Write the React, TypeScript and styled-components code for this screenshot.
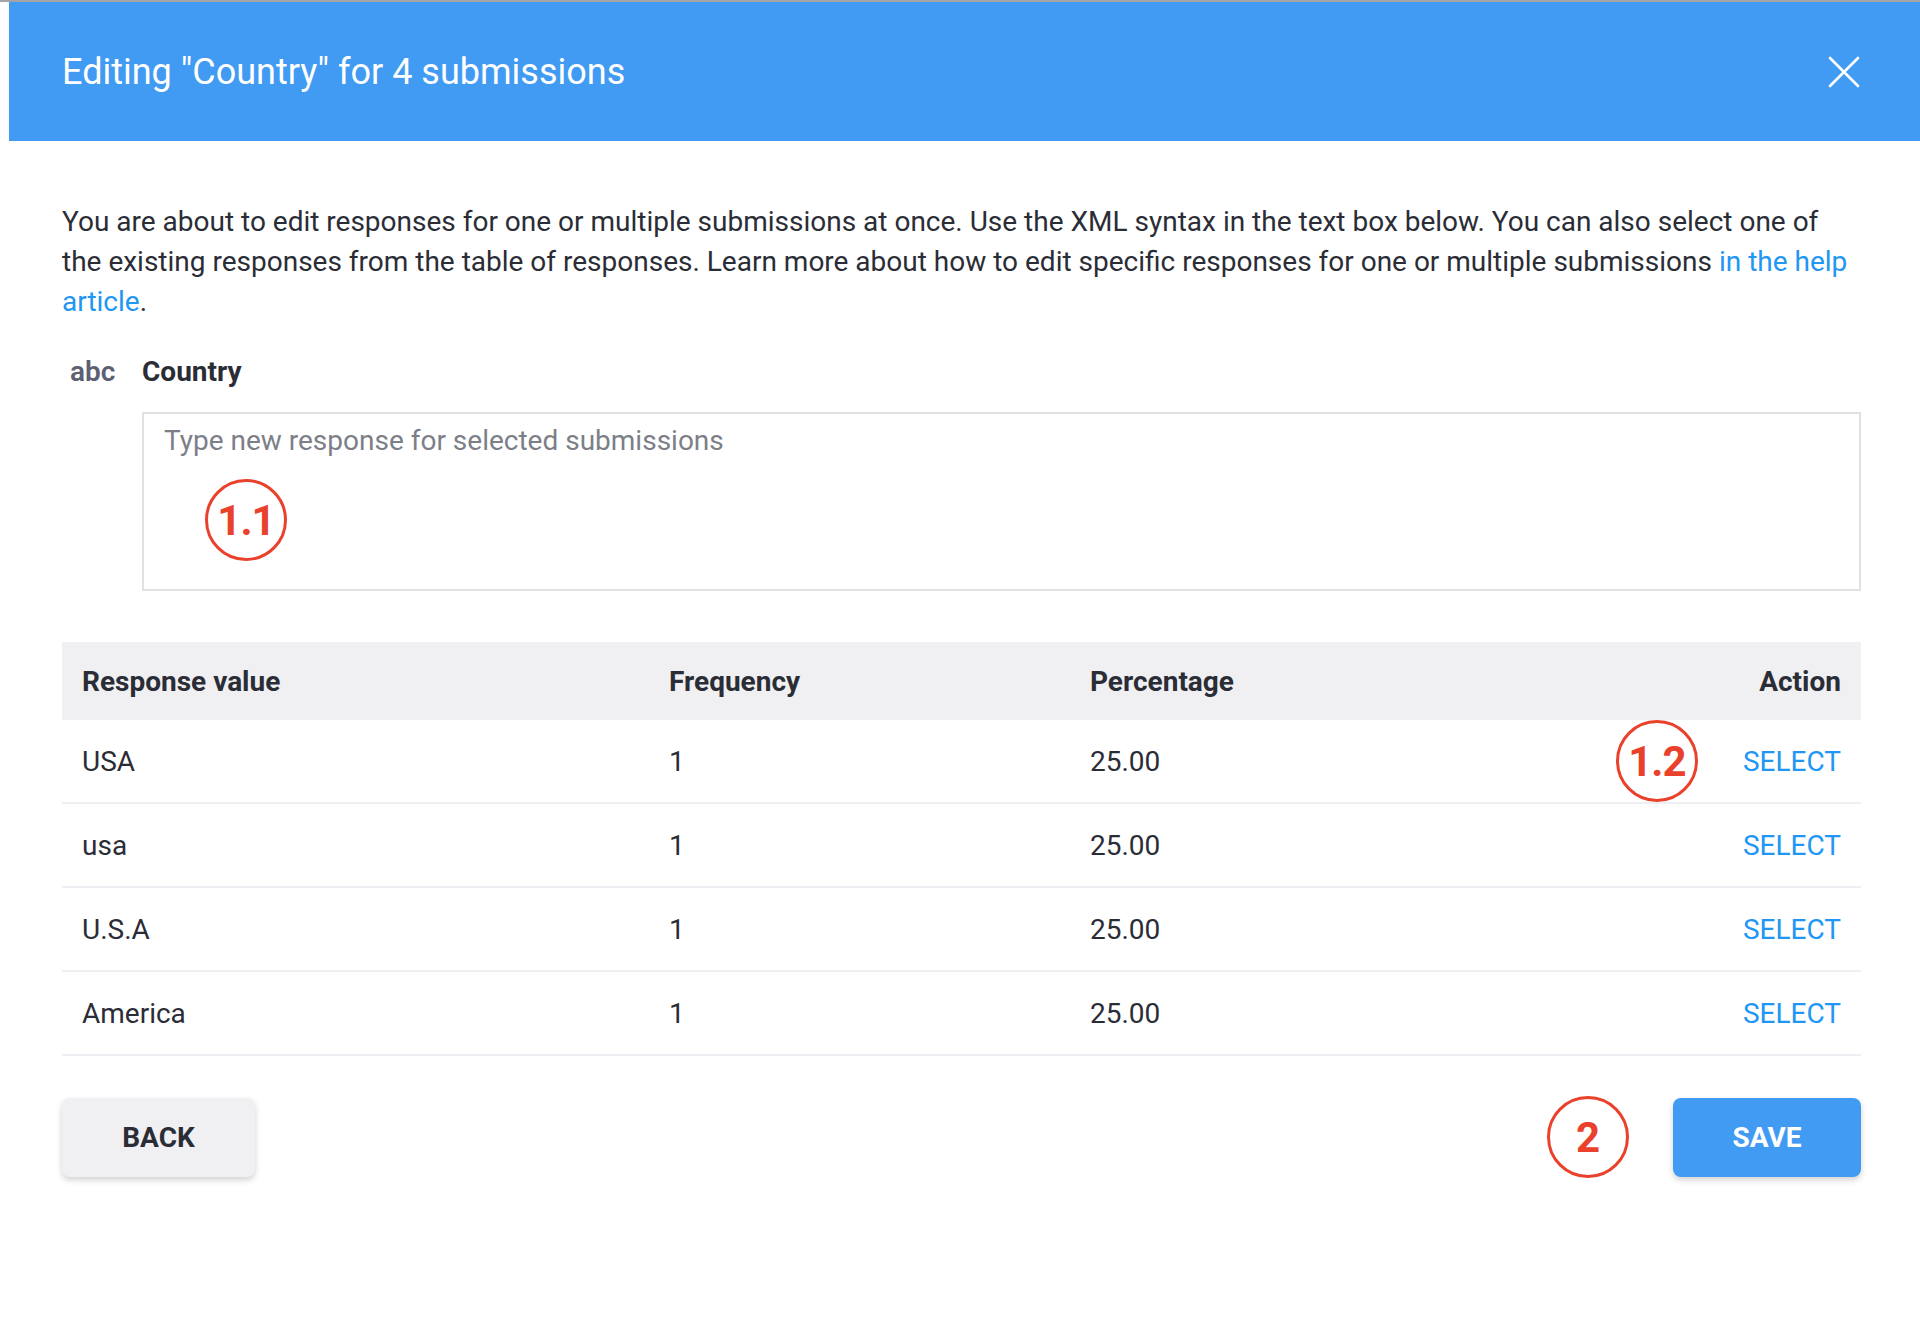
import React from 'react';
import styled, { createGlobalStyle } from 'styled-components';

const GlobalStyle = createGlobalStyle`
  html, body {
    margin: 0;
    padding: 0;
    background: #ffffff;
  }
  body {
    font-family: Roboto, "Liberation Sans", Arial, sans-serif;
    color: #2b2d36;
  }
`;

interface ResponseRow {
  value: string;
  frequency: number;
  percentage: string;
}

const rows: ResponseRow[] = [
  { value: 'USA', frequency: 1, percentage: '25.00' },
  { value: 'usa', frequency: 1, percentage: '25.00' },
  { value: 'U.S.A', frequency: 1, percentage: '25.00' },
  { value: 'America', frequency: 1, percentage: '25.00' }
];

const CloseIcon = () => (
  <svg width="32" height="32" viewBox="0 0 32 32" fill="none">
    <path d="M2 2L30 30M30 2L2 30" stroke="#ffffff" strokeWidth="2.6" strokeLinecap="round" />
  </svg>
);

export default function App() {
  return (
    <>
      <GlobalStyle />
      <Page>
        <BackdropStrip />
        <Modal>
          <Header>
            <Title>Editing "Country" for 4 submissions</Title>
            <CloseButton aria-label="Close">
              <CloseIcon />
            </CloseButton>
          </Header>
          <Body>
            <Intro>
              You are about to edit responses for one or multiple submissions at once. Use the XML
              syntax in the text box below. You can also select one of the existing responses from
              the table of responses. Learn more about how to edit specific responses for one or
              multiple submissions <HelpLink href="#">in the help article</HelpLink>.
            </Intro>

            <QuestionLabel>
              <TypeTag>abc</TypeTag>
              <QuestionName>Country</QuestionName>
            </QuestionLabel>

            <EditorWrap>
              <ResponseInput placeholder="Type new response for selected submissions" />
              <Marker $left={63} $top={67}>1.1</Marker>
            </EditorWrap>

            <Table>
              <colgroup>
                <col style={{ width: 587 }} />
                <col style={{ width: 421 }} />
                <col />
                <col style={{ width: 300 }} />
              </colgroup>
              <thead>
                <tr>
                  <HeadCell>Response value</HeadCell>
                  <HeadCell>Frequency</HeadCell>
                  <HeadCell>Percentage</HeadCell>
                  <HeadCell $right>Action</HeadCell>
                </tr>
              </thead>
              <tbody>
                {rows.map((row, i) => (
                  <Row key={row.value}>
                    <Cell>{row.value}</Cell>
                    <Cell>{row.frequency}</Cell>
                    <Cell>{row.percentage}</Cell>
                    <Cell $right>
                      <ActionWrap>
                        {i === 0 && <InlineMarker>1.2</InlineMarker>}
                        <SelectButton>SELECT</SelectButton>
                      </ActionWrap>
                    </Cell>
                  </Row>
                ))}
              </tbody>
            </Table>

            <Footer>
              <BackButton>BACK</BackButton>
              <FooterRight>
                <StepMarker>2</StepMarker>
                <SaveButton>SAVE</SaveButton>
              </FooterRight>
            </Footer>
          </Body>
        </Modal>
      </Page>
    </>
  );
}

const Page = styled.div`
  width: 1920px;
  min-height: 1322px;
  overflow: hidden;
  background: #ffffff;
`;

const BackdropStrip = styled.div`
  height: 2px;
  background: #a3a4a8;
`;

const Modal = styled.div`
  margin-left: 9px;
  background: #ffffff;
`;

const Header = styled.div`
  height: 139px;
  background: #419bf3;
  display: flex;
  align-items: center;
  justify-content: space-between;
  padding: 0 60px 0 53px;
`;

const Title = styled.h1`
  margin: 0;
  font-size: 36px;
  font-weight: 400;
  color: #ffffff;
`;

const CloseButton = styled.button`
  border: none;
  background: transparent;
  padding: 0;
  display: flex;
  cursor: pointer;
`;

const Body = styled.div`
  padding: 61px 59px 0 53px;
`;

const Intro = styled.p`
  margin: 0;
  font-size: 28px;
  line-height: 40px;
  color: #2b2d36;
`;

const HelpLink = styled.a`
  color: #2196f3;
  text-decoration: none;
`;

const QuestionLabel = styled.div`
  display: flex;
  align-items: center;
  margin-top: 29px;
  height: 40px;
  font-size: 28px;
  font-weight: 700;
`;

const TypeTag = styled.span`
  width: 80px;
  padding-left: 8px;
  box-sizing: border-box;
  color: #5c6072;
  font-weight: 600;
`;

const QuestionName = styled.span`
  color: #2b2d36;
`;

const EditorWrap = styled.div`
  position: relative;
  margin: 21px 0 0 80px;
`;

const ResponseInput = styled.textarea`
  display: block;
  width: 100%;
  height: 179px;
  box-sizing: border-box;
  border: 2px solid #e0e1e5;
  padding: 9px 20px;
  resize: none;
  font-family: inherit;
  font-size: 28px;
  line-height: 36px;
  color: #2b2d36;
  outline: none;

  &::placeholder {
    color: #7c7f88;
  }
`;

const Marker = styled.div<{ $left: number; $top: number }>`
  position: absolute;
  left: ${({ $left }) => $left}px;
  top: ${({ $top }) => $top}px;
  width: 82px;
  height: 82px;
  box-sizing: border-box;
  border: 3px solid #e9412b;
  border-radius: 50%;
  display: flex;
  align-items: center;
  justify-content: center;
  color: #e9412b;
  font-size: 42px;
  font-weight: 700;
  letter-spacing: -1px;
  background: #ffffff;
`;

const InlineMarker = styled(Marker).attrs({ $left: 0, $top: 0 })`
  left: auto;
  right: calc(100% + 45px);
  top: 50%;
  transform: translateY(-50%);
`;

const StepMarker = styled.div`
  width: 82px;
  height: 82px;
  box-sizing: border-box;
  border: 3px solid #e9412b;
  border-radius: 50%;
  display: flex;
  align-items: center;
  justify-content: center;
  color: #e9412b;
  font-size: 42px;
  font-weight: 700;
`;

const Table = styled.table`
  width: 100%;
  margin-top: 51px;
  border-collapse: collapse;
  table-layout: fixed;
  font-size: 28px;
`;

const HeadCell = styled.th<{ $right?: boolean }>`
  height: 78px;
  padding: 0 20px;
  background: #f0f0f3;
  text-align: ${({ $right }) => ($right ? 'right' : 'left')};
  font-weight: 700;
  color: #2b2d36;
`;

const Row = styled.tr`
  border-bottom: 2px solid #eeeff2;
`;

const Cell = styled.td<{ $right?: boolean }>`
  height: 82px;
  padding: 0 20px;
  text-align: ${({ $right }) => ($right ? 'right' : 'left')};
  color: #2b2d36;
`;

const ActionWrap = styled.span`
  position: relative;
  display: inline-flex;
  align-items: center;
`;

const SelectButton = styled.button`
  border: none;
  background: transparent;
  padding: 0;
  font-family: inherit;
  font-size: 28px;
  color: #2196f3;
  cursor: pointer;
`;

const Footer = styled.div`
  display: flex;
  justify-content: space-between;
  align-items: center;
  margin-top: 40px;
`;

const FooterRight = styled.div`
  display: flex;
  align-items: center;
  gap: 44px;
`;

const BaseButton = styled.button`
  height: 79px;
  border: none;
  border-radius: 8px;
  font-family: inherit;
  font-size: 28px;
  font-weight: 700;
  cursor: pointer;
  box-shadow: 0 3px 6px rgba(0, 0, 0, 0.18);
`;

const BackButton = styled(BaseButton)`
  width: 193px;
  background: #f0f0f3;
  color: #2b2d36;
`;

const SaveButton = styled(BaseButton)`
  width: 188px;
  background: #419bf3;
  color: #ffffff;
`;
